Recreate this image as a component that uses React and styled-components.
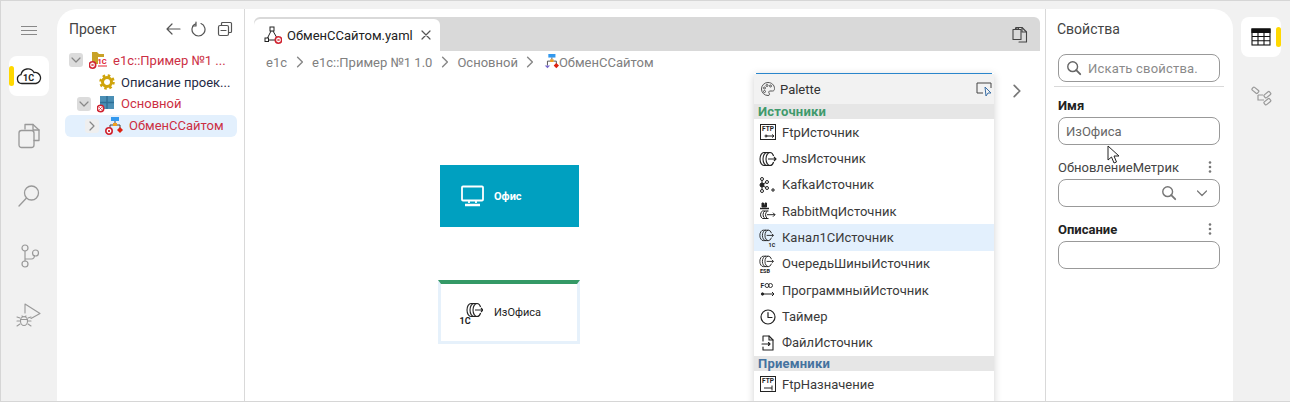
import React from 'react';
import styled, { createGlobalStyle } from 'styled-components';

const Global = createGlobalStyle`
  html, body { margin: 0; padding: 0; background: #f1f1f1; }
  * { box-sizing: border-box; }
`;

const Page = styled.div`
  width: 1290px;
  height: 402px;
  display: flex;
  overflow: hidden;
  background: #f1f1f1;
  border-top: 1px solid #d6d6d6;
  border-bottom: 1px solid #d6d6d6;
  border-left: 1px solid #d6d6d6;
  font-family: Roboto, "Liberation Sans", sans-serif;
  color: #333;
`;

const LeftRail = styled.nav`
  width: 56px;
  flex: none;
  display: flex;
  flex-direction: column;
  align-items: center;
  padding-top: 14px;
`;

const RightRail = styled.nav`
  width: 57px;
  flex: none;
  display: flex;
  flex-direction: column;
  align-items: center;
  padding: 16px 1px 0 0;
`;

const RailButton = styled.div`
  width: 40px;
  height: 40px;
  margin-bottom: ${(p) => p.$gap || 20}px;
  position: relative;
  display: flex;
  align-items: center;
  justify-content: center;
  border-radius: 8px;
  background: ${(p) => (p.$active ? '#fff' : 'transparent')};
  color: #999;
  &::after {
    content: '';
    display: ${(p) => (p.$active ? 'block' : 'none')};
    position: absolute;
    top: 10px;
    ${(p) => p.$active}: 0;
    width: 5px;
    height: 20px;
    border-radius: 3px;
    background: #ffd800;
  }
`;

const Burger = styled.div`
  width: 16px;
  height: 9px;
  margin: 11px 0 21px;
  border-top: 1px solid #888;
  border-bottom: 1px solid #888;
  position: relative;
  &::after {
    content: '';
    position: absolute;
    left: 0;
    right: 0;
    top: 3px;
    border-top: 1px solid #888;
  }
`;

const Workspace = styled.main`
  flex: 1;
  margin-top: 8px;
  display: flex;
  background: #fff;
  border-radius: 20px 20px 0 0;
  overflow: hidden;
`;

const ProjectPanel = styled.section`
  width: 188px;
  flex: none;
  border-right: 1px solid #d9d9d9;
  padding: 0 8px;
`;

const PanelHead = styled.div`
  height: 40px;
  display: flex;
  align-items: center;
  padding-left: 4px;
  font-size: 14px;
  color: #444;
`;

const PanelTitle = styled.span`
  flex: 1;
`;

const HeadIcons = styled.div`
  display: flex;
  gap: 10px;
  margin-right: 3px;
  color: #555;
`;

const TreeRow = styled.div`
  height: ${(p) => p.$h || 22}px;
  width: 172px;
  display: flex;
  align-items: center;
  padding-left: ${(p) => p.$indent}px;
  border-radius: 6px;
  font-size: 13px;
  white-space: nowrap;
  color: ${(p) => (p.$error ? '#cc2f44' : '#1f2a44')};
  background: ${(p) => (p.$selected ? '#e3f0fd' : 'transparent')};
`;

const Toggle = styled.span`
  width: 14px;
  height: 14px;
  flex: none;
  margin-right: ${(p) => p.$space}px;
  display: flex;
  align-items: center;
  justify-content: center;
  border-radius: 3px;
  background: ${(p) => (p.$light ? '#efefef' : '#dcdcdc')};
  color: #888;
`;

const TreeIcon = styled.span`
  width: 18px;
  height: 18px;
  flex: none;
  margin-right: ${(p) => p.$space}px;
  display: flex;
`;

const Editor = styled.section`
  width: 800px;
  flex: none;
  position: relative;
  padding: 8px 5px 0 9px;
`;

const TabBar = styled.div`
  height: 34px;
  display: flex;
  justify-content: space-between;
  align-items: flex-end;
  background: #d9d9d9;
  border-radius: 6px 6px 0 0;
  padding: 2px 0 0 0;
`;

const Tab = styled.div`
  width: 186px;
  height: 32px;
  display: flex;
  align-items: center;
  padding-left: 10px;
  background: #fff;
  border-radius: 6px 6px 0 0;
  font-size: 13px;
  color: #222;
`;

const TabClose = styled.span`
  display: flex;
  margin-left: 7px;
  color: #555;
`;

const TabAction = styled.span`
  display: flex;
  align-self: center;
  margin-right: 11px;
  color: #444;
`;

const Crumbs = styled.div`
  height: 22px;
  display: flex;
  align-items: center;
  padding-left: 12px;
  font-size: 13px;
  color: #808080;
`;

const CrumbSep = styled.span`
  display: flex;
  margin: 0 6.5px;
  color: #888;
`;

const FlowNode = styled.div`
  position: absolute;
  left: ${(p) => p.$x}px;
  top: ${(p) => p.$y}px;
  width: ${(p) => p.$w}px;
  height: ${(p) => p.$h}px;
  display: flex;
  align-items: center;
  font-size: 11px;
`;

const OfficeNode = styled(FlowNode)`
  background: #00a0c0;
  color: #fff;
  font-weight: 700;
  padding-left: 21px;
  gap: 10px;
`;

const SourceNode = styled(FlowNode)`
  background: #fff;
  color: #222;
  border: 3px solid #e6f1fb;
  border-top: 4px solid #349966;
  padding-left: 18px;
  gap: 11px;
`;

const Palette = styled.aside`
  position: absolute;
  left: 509px;
  top: 64px;
  width: 240px;
  height: 340px;
  background: #fff;
  box-shadow: 0 2px 8px rgba(0, 0, 0, 0.18);
  overflow: hidden;
  &::before {
    content: '';
    display: block;
    height: 1px;
    margin: 0 2px;
    background: #2a86cc;
  }
`;

const PaletteHead = styled.div`
  height: 30px;
  display: flex;
  align-items: center;
  padding: 0 2px 0 6px;
  background: #f2f2f2;
  font-size: 13px;
  color: #333;
`;

const PaletteTitle = styled.span`
  flex: 1;
  margin-left: 4px;
`;

const Section = styled.div`
  height: 15px;
  line-height: 15px;
  padding-left: 4px;
  background: #e6e6e6;
  font-size: 13px;
  font-weight: 700;
  letter-spacing: 0.2px;
  color: ${(p) => p.$color};
`;

const PaletteItem = styled.div`
  height: 26.35px;
  display: flex;
  align-items: center;
  padding-left: 5px;
  font-size: 13px;
  color: #3a3a3a;
  background: ${(p) => (p.$hover ? '#e3f0fd' : 'transparent')};
`;

const ItemIcon = styled.span`
  width: 18px;
  height: 18px;
  margin-right: 5px;
  display: flex;
  color: #222;
`;

const PaletteArrow = styled.span`
  position: absolute;
  left: 765px;
  top: 75px;
  display: flex;
  color: #777;
`;

const Props = styled.section`
  flex: 1;
  border-left: 1px solid #d9d9d9;
  padding: 0 11px;
  font-size: 13px;
  position: relative;
`;

const PropsTitle = styled.div`
  height: 40px;
  margin-bottom: 5px;
  display: flex;
  align-items: center;
  font-size: 14px;
  color: #444;
`;

const Field = styled.div`
  width: 162px;
  height: 28px;
  margin-left: 1px;
  display: flex;
  align-items: center;
  padding: 0 7px;
  border: 1px solid #999;
  border-radius: 8px;
  font-size: 13px;
  color: #666;
`;

const Hint = styled.span`
  margin-left: 6px;
  color: #8a8a8a;
  letter-spacing: 0.2px;
  white-space: nowrap;
  overflow: hidden;
`;

const Divider = styled.div`
  width: 170px;
  margin: 4px 0 0 -3px;
  border-top: 1px solid #d9d9d9;
`;

const Label = styled.div`
  height: 20px;
  width: 163px;
  margin: ${(p) => p.$top}px 0 2px 1px;
  display: flex;
  align-items: center;
  justify-content: space-between;
  font-size: 13px;
  font-weight: ${(p) => (p.$bold ? 700 : 400)};
  color: ${(p) => (p.$bold ? '#222' : '#444')};
`;

const Dots = styled.span`
  display: flex;
  margin-right: 9px;
  color: #777;
`;

const FieldIcons = styled.span`
  margin-left: auto;
  margin-right: 4px;
  display: flex;
  align-items: center;
  gap: 19px;
  color: #777;
`;

const Cursor = styled.svg`
  position: absolute;
  left: 61px;
  top: 136px;
`;

const Stroke = ({ w = 16, h = 16, vb, sw = 1.2, children }) => (
  <svg width={w} height={h} viewBox={vb || `0 0 ${w} ${h}`} fill="none" stroke="currentColor" strokeWidth={sw} strokeLinecap="round" strokeLinejoin="round">
    {children}
  </svg>
);

const Chevron = ({ dir = 'right', s = 10 }) => (
  <Stroke w={s} h={s} vb="0 0 10 10">
    {dir === 'right' ? <path d="M3 1l4 4-4 4" /> : <path d="M1 3l4 4 4-4" />}
  </Stroke>
);

const ErrBadge = ({ x, y }) => (
  <g>
    <circle cx={x} cy={y} r="3.2" fill="#fff" stroke="#d0222f" strokeWidth="1.6" />
    <path d={`M${x - 1.2} ${y - 1.2}l2.4 2.4m0-2.4l-2.4 2.4`} stroke="#d0222f" strokeWidth="0.9" />
  </g>
);

const FlowGlyph = ({ badge, w = 18, h = 18 }) => (
  <svg width={w} height={h} viewBox="0 0 18 18" fill="none">
    <rect x="6" y="0" width="8" height="4" fill="#3399ee" />
    <rect x="8" y="6" width="4" height="3" fill="#f0a020" />
    <path d="M10 4v2M5 13V8h3M12 8h3v4" stroke="#444" />
    <path d="M15 10l3 3-3 3-3-3z" fill="#dd2211" />
    {badge ? <ErrBadge x="4" y="14" /> : <path d="M2 13h6l-3 3z" fill="#7766cc" />}
  </svg>
);

const RINGS = 'M5 1.500A4 6.500 0 0 0 5 14.500M8 1.500A4 6.500 0 0 0 8 14.500M11 1.500A4 6.500 0 0 0 11 14.500M5 1.500h6a4 6.500 0 0 1 3.600 3.500M5 14.500h6a4 6.500 0 0 0 3.600-3.500M9 8h8M15 6l2 2-2 2';

const Channel = ({ tag, tagX = 9 }) => (
  <svg width="18" height="18" viewBox="0 0 18 18" fill="none" stroke="#222">
    <path d={RINGS} strokeWidth="1.100" transform={tag ? 'translate(0 0) scale(0.85 0.8)' : 'translate(0 1)'} />
    {tag && <text x={tagX} y="17.500" fontSize="5.500" fontWeight="700" fill="#222" stroke="none" textAnchor="middle" fontFamily="Roboto, sans-serif">{tag}</text>}
  </svg>
);

const FtpBox = ({ out }) => (
  <svg width="18" height="18" viewBox="0 0 18 18" fill="none" stroke="#222" strokeWidth="1">
    <rect x="1.500" y="1.500" width="15" height="15" />
    <text x="9" y="8" fontSize="6.500" fontWeight="700" fill="#222" stroke="none" textAnchor="middle" fontFamily="Roboto, sans-serif">FTP</text>
    {out ? <path d="M5 13h8M13 10.500v5" /> : <path d="M7 13h8M7 13m1 0a1 1 0 1 1-2 0a1 1 0 1 1 2 0M13 11.500l2 1.500-2 1.500" />}
  </svg>
);

const Kafka = () => (
  <svg width="18" height="18" viewBox="0 0 18 18" fill="#222" stroke="#222" strokeWidth="1">
    <circle cx="3" cy="3" r="1.500" fill="none" />
    <circle cx="3" cy="9" r="2" />
    <circle cx="3" cy="15" r="1.500" fill="none" />
    <circle cx="8" cy="6" r="1.500" fill="none" />
    <circle cx="8" cy="12" r="1.500" fill="none" />
    <path d="M3 4.500v9M4 8l3-1.500M4 10l3 1.500M12 14h4M14 12v4" />
  </svg>
);

const Rabbit = () => (
  <svg width="18" height="18" viewBox="0 0 18 18" fill="none" stroke="#222" strokeWidth="1">
    <path d="M3 5V1h1.500v2H6V1h1.500v4z" fill="#222" />
    <path d="M1 6.500h9" strokeWidth="1.400" />
    <path d="M3.500 9A3 4 0 0 0 3.500 16.500M6 9A3 4 0 0 0 6 16.500M8.500 9A3 4 0 0 0 8.500 16.500M3.500 9h6M3.500 16.500h6M8 12.700h8M14 10.700l2 2-2 2" />
  </svg>
);

const Program = () => (
  <svg width="18" height="18" viewBox="0 0 18 18" fill="none" stroke="#222" strokeWidth="0.9">
    <text x="1.500" y="7" fontSize="6.500" fontWeight="700" fill="#222" stroke="none" fontFamily="Roboto, sans-serif">F</text>
    <circle cx="8" cy="4.500" r="2" />
    <circle cx="11.500" cy="4.500" r="2" />
    <path d="M3 13h12" strokeWidth="1" />
    <circle cx="3.500" cy="13" r="1.200" fill="#222" />
    <path d="M13 11l2 2-2 2" strokeWidth="1" />
  </svg>
);

const Timer = () => (
  <Stroke w={18} h={18} sw={1.200}>
    <circle cx="9" cy="9" r="7" />
    <path d="M9 4.500V9.500h4" />
  </Stroke>
);

const FileSrc = () => (
  <Stroke w={18} h={18} sw={1.100}>
    <path d="M4 7V2h6l4 4v10H4v-3" />
    <path d="M10 2v4h4M3 10h8M9.500 8.500l1.500 1.500-1.500 1.500" />
  </Stroke>
);

const items = [
  ['FtpИсточник', <FtpBox />],
  ['JmsИсточник', <Channel />],
  ['KafkaИсточник', <Kafka />],
  ['RabbitMqИсточник', <Rabbit />],
  ['Канал1СИсточник', <Channel tag="1C" tagX={13} />, true],
  ['ОчередьШиныИсточник', <Channel tag="ESB" tagX={6} />],
  ['ПрограммныйИсточник', <Program />],
  ['Таймер', <Timer />],
  ['ФайлИсточник', <FileSrc />],
];

const SearchGlyph = ({ s = 18 }) => (
  <svg width={s} height={s} viewBox="0 0 18 18" fill="none" stroke="currentColor" strokeWidth="1.600" strokeLinecap="round">
    <circle cx="7.500" cy="7.500" r="5.500" />
    <path d="M11.500 11.500L16 16" strokeWidth="2" />
  </svg>
);

const VDots = () => (
  <svg width="4" height="12" viewBox="0 0 4 12" fill="currentColor">
    <circle cx="2" cy="1.500" r="1.300" />
    <circle cx="2" cy="6" r="1.300" />
    <circle cx="2" cy="10.500" r="1.300" />
  </svg>
);

export default function App() {
  return (
    <Page>
      <Global />
      <LeftRail>
        <Burger />
        <RailButton $active="left">
          <svg width="26" height="18" viewBox="0 0 26 18" fill="none" stroke="#222" strokeWidth="1.300">
            <path d="M6 16.500a4.500 4.500 0 0 1-1-8.900A7 7 0 0 1 18 5.500a5.500 5.500 0 0 1 2 11z" />
            <text x="12.500" y="14" fontSize="9" fontWeight="700" fill="#222" stroke="none" textAnchor="middle" fontFamily="Roboto, sans-serif">1C</text>
          </svg>
        </RailButton>
        <RailButton>
          <Stroke w={22} h={26} sw={1.300}>
            <path d="M7 6V1.500h8l6 5.500v10.500h-5" />
            <path d="M15 1.500V7h6" />
            <rect x="1" y="7.500" width="15" height="17" rx="2.500" />
          </Stroke>
        </RailButton>
        <RailButton>
          <Stroke w={24} h={24} sw={1.300}>
            <circle cx="14.500" cy="9" r="7" />
            <path d="M9.500 14L2 22" />
          </Stroke>
        </RailButton>
        <RailButton>
          <Stroke w={22} h={24} sw={1.200}>
            <circle cx="7" cy="4" r="3" />
            <circle cx="7" cy="20" r="3" />
            <circle cx="17.500" cy="9" r="3" />
            <path d="M7 7v10M7 15h6.500c2 0 3-2 3-3.500" />
          </Stroke>
        </RailButton>
        <RailButton>
          <Stroke w={26} h={26} sw={1.100}>
            <path d="M9 10V1l15 9.500-9 5" />
            <ellipse cx="8" cy="18" rx="3.500" ry="4.500" />
            <path d="M4.500 16.500h7M1 14l3 1M15 14l-3 1M1 18h3M15 18h-3M1 23l3-2M15 23l-3-2M6 13l1 1M10 13l-1 1" />
          </Stroke>
        </RailButton>
      </LeftRail>

      <Workspace>
        <ProjectPanel>
          <PanelHead>
            <PanelTitle>Проект</PanelTitle>
            <HeadIcons>
              <Stroke>
                <path d="M2 8h13M7 3L2 8l5 5" />
              </Stroke>
              <Stroke>
                <path d="M5 2.500a6.500 6.500 0 1 0 5 0M5 1v4H1.500" />
              </Stroke>
              <Stroke>
                <rect x="1.500" y="4.500" width="10" height="10" rx="1.500" />
                <path d="M4.500 4V2.500A1 1 0 0 1 5.500 1.500h8a1 1 0 0 1 1 1v8a1 1 0 0 1-1 1H12M4 9.500h5" />
              </Stroke>
            </HeadIcons>
          </PanelHead>
          <TreeRow $indent={4} $error>
            <Toggle $space={6}><Chevron dir="down" /></Toggle>
            <TreeIcon $space={6}>
              <svg width="18" height="18" viewBox="0 0 18 18" fill="none">
                <path d="M3 1h5l2 2h5v3H9v7H3z" fill="#c9a227" />
                <text x="13" y="13" fontSize="7.500" fontWeight="700" fill="#e02030" textAnchor="middle" fontFamily="Roboto, sans-serif">1C</text>
                <path d="M9 15h9" stroke="#e02030" />
                <ErrBadge x="3.500" y="14" />
              </svg>
            </TreeIcon>
            e1c::Пример №1 ...
          </TreeRow>
          <TreeRow $indent={33}>
            <TreeIcon $space={5}>
              <svg width="18" height="18" viewBox="0 0 18 18" fill="none">
                <circle cx="9" cy="9" r="4.500" stroke="#cfa40c" strokeWidth="3" />
                <circle cx="9" cy="9" r="6.500" stroke="#cfa40c" strokeWidth="2.500" strokeDasharray="2.500 2.600" />
              </svg>
            </TreeIcon>
            Описание проек...
          </TreeRow>
          <TreeRow $indent={12} $error $h={21.5}>
            <Toggle $space={6}><Chevron dir="down" /></Toggle>
            <TreeIcon $space={6}>
              <svg width="18" height="18" viewBox="0 0 18 18" fill="none">
                <rect x="3" y="1" width="14" height="13" fill="#4b8fb5" />
                <path d="M10 1v13M3 7.500h14" stroke="#2f6f96" strokeWidth="1.500" />
                <ErrBadge x="3.500" y="13.500" />
              </svg>
            </TreeIcon>
            Основной
          </TreeRow>
          <TreeRow $indent={20} $error $selected>
            <Toggle $space={6} $light><Chevron /></Toggle>
            <TreeIcon $space={6}><FlowGlyph badge /></TreeIcon>
            ОбменССайтом
          </TreeRow>
        </ProjectPanel>

        <Editor>
          <TabBar>
            <Tab>
              <svg width="18" height="18" viewBox="0 0 18 18" fill="none" stroke="#222" style={{ marginRight: 5 }}>
                <rect x="6" y="1" width="4" height="4" />
                <rect x="1" y="12" width="3.500" height="3.500" />
                <path d="M7 5l-3.500 7M9 5l4 7M4.500 14H11" />
                <ErrBadge x="14.500" y="14" />
              </svg>
              ОбменССайтом.yaml
              <TabClose>
                <Stroke w={12} h={12}><path d="M2 2l8 8M10 2l-8 8" /></Stroke>
              </TabClose>
            </Tab>
            <TabAction>
              <Stroke w={18} h={18} sw={1.100}>
                <path d="M5 3V1.500h6l4.500 4.500v10H8" />
                <path d="M11 1.500V6h4.500" />
                <rect x="2" y="3.500" width="8" height="10" fill="#d9d9d9" />
                <path d="M4.500 3.500V2h3v1.500" />
              </Stroke>
            </TabAction>
          </TabBar>
          <Crumbs>
            e1c
            <CrumbSep><Chevron s={12} /></CrumbSep>
            e1c::Пример №1 1.0
            <CrumbSep><Chevron s={12} /></CrumbSep>
            Основной
            <CrumbSep><Chevron s={12} /></CrumbSep>
            <FlowGlyph w={16} h={16} />
            ОбменССайтом
          </Crumbs>

          <OfficeNode $x={195} $y={156} $w={139} $h={62}>
            <svg width="23" height="22" viewBox="0 0 23 22" fill="none" stroke="#fff" strokeWidth="1.800">
              <rect x="1" y="1.500" width="21" height="14" rx="1" />
              <path d="M8 16v2M15 16v2" />
              <path d="M4 20h15" strokeWidth="2.400" />
            </svg>
            Офис
          </OfficeNode>
          <SourceNode $x={193} $y={271} $w={142} $h={64}>
            <svg width="24" height="24" viewBox="0 0 24 24" fill="none" stroke="#222" strokeWidth="1.100">
              <path d={RINGS} transform="translate(7 1)" />
              <text x="6" y="23" fontSize="9" fontWeight="700" fill="#222" stroke="none" textAnchor="middle" fontFamily="Roboto, sans-serif">1C</text>
            </svg>
            ИзОфиса
          </SourceNode>

          <Palette>
            <PaletteHead>
              <svg width="16" height="16" viewBox="0 0 16 16" fill="none" stroke="#555" strokeWidth="1">
                <path d="M8 1.500a6.500 6.500 0 1 0 0 13c1.800 0 1.800-1.500 1-2.500-.7-1 0-2 1-2h2.500c1.500 0 2-1 2-2.500 0-3.500-3-6-6.500-6z" />
                <circle cx="4.500" cy="7" r="1" />
                <circle cx="7" cy="4.500" r="1" />
                <circle cx="10.500" cy="5" r="1" />
                <circle cx="4.500" cy="10.500" r="1" />
              </svg>
              <PaletteTitle>Palette</PaletteTitle>
              <svg width="16" height="16" viewBox="0 0 16 16" fill="none" stroke="#444" strokeWidth="1">
                <path d="M7 12H1V2h14v5" />
                <path d="M9 6l1 9 2-3 3 0z" stroke="#3a6ea5" />
              </svg>
            </PaletteHead>
            <Section $color="#3f9a6c">Источники</Section>
            {items.map(([name, icon, hover]) => (
              <PaletteItem key={name} $hover={hover}>
                <ItemIcon>{icon}</ItemIcon>
                {name}
              </PaletteItem>
            ))}
            <Section $color="#44729f">Приемники</Section>
            <PaletteItem>
              <ItemIcon><FtpBox out /></ItemIcon>
              FtpНазначение
            </PaletteItem>
          </Palette>
          <PaletteArrow><Chevron s={14} /></PaletteArrow>
        </Editor>

        <Props>
          <PropsTitle>Свойства</PropsTitle>
          <Field>
            <SearchGlyph s={16} />
            <Hint>Искать свойства.</Hint>
          </Field>
          <Divider />
          <Label $bold $top={8}>Имя</Label>
          <Field>ИзОфиса</Field>
          <Label $top={12}>
            ОбновлениеМетрик
            <Dots><VDots /></Dots>
          </Label>
          <Field>
            <FieldIcons>
              <SearchGlyph s={16} />
              <Stroke w={12} h={12}><path d="M1.500 4L6 8.500 10.500 4" /></Stroke>
            </FieldIcons>
          </Field>
          <Label $bold $top={12}>
            Описание
            <Dots><VDots /></Dots>
          </Label>
          <Field />
          <Cursor width="13" height="19" viewBox="0 0 13 19">
            <path d="M1 1v14l3.500-3 2.500 6 2.500-1-2.500-6H12z" fill="#fff" stroke="#222" strokeWidth="1" />
          </Cursor>
        </Props>
      </Workspace>

      <RightRail>
        <RailButton $active="right" $gap={19}>
          <svg width="20" height="18" viewBox="0 0 20 18" fill="none" stroke="#111" strokeWidth="1.100">
            <rect x="1" y="1" width="18" height="16" />
            <path d="M1 1h18v3.500H1z" fill="#111" />
            <path d="M1 8.500h18M1 12.750h18M7 4.500V17M13 4.500V17" />
          </svg>
        </RailButton>
        <RailButton>
          <svg width="22" height="20" viewBox="0 0 22 20" fill="none" stroke="#999" strokeWidth="1.200">
            <rect x="-3" y="-1.800" width="7" height="3.600" rx="1" transform="translate(5 4) rotate(40)" />
            <rect x="-3" y="-1.800" width="7" height="3.600" rx="1" transform="translate(17 9) rotate(-40)" />
            <rect x="-3" y="-1.800" width="7" height="3.600" rx="1" transform="translate(17 16) rotate(-40)" />
            <path d="M8 9v5h6M8 9h5" />
          </svg>
        </RailButton>
      </RightRail>
    </Page>
  );
}
